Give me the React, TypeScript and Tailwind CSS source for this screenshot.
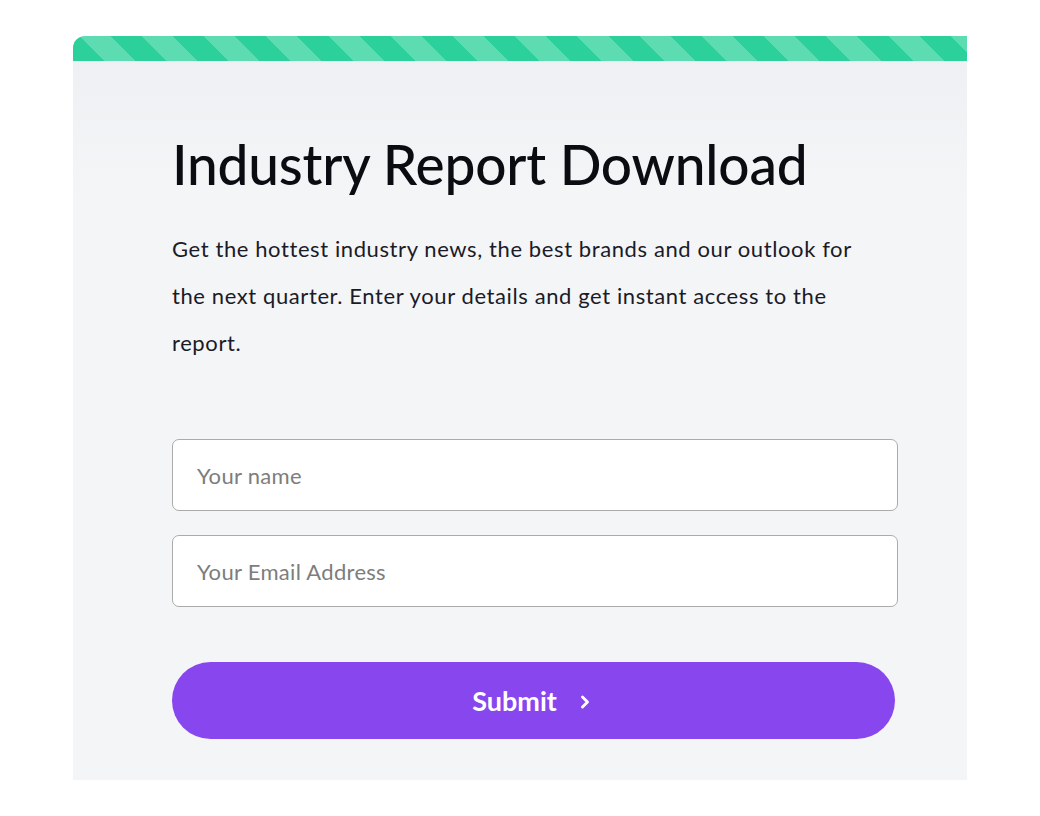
import { ChevronRight } from 'lucide-react'

export default function App() {
  return (
    <div className="min-h-screen bg-white pt-[36px] pl-[73px] font-['Lato',sans-serif]">
      <section className="w-[894px] h-[744px] bg-[#f3f4f6] rounded-tl-[12px] overflow-hidden flex flex-col">
        {/* Striped top band */}
        <div className="h-[25px] w-full bg-[repeating-linear-gradient(45deg,#2bd09a_0px,#2bd09a_22px,#5ddcb2_22px,#5ddcb2_44px)]" />

        <div className="flex-1 bg-[linear-gradient(180deg,#eef0f3_0%,#f4f5f7_18%,#f4f5f7_100%)] pl-[99px] pr-[69px] pt-[68px]">
          <h1 className="text-[55px] leading-[70px] font-medium text-[#0b0b12] tracking-[-0.2px]">
            Industry Report Download
          </h1>

          <p className="mt-[26px] w-[692px] text-[22px] leading-[47px] tracking-[0.6px] text-[#1b1b28]">
            Get the hottest industry news, the best brands and our outlook for the next quarter. Enter your details and get instant access to the report.
          </p>

          <form className="mt-[73px] flex flex-col gap-[24px]" onSubmit={e => e.preventDefault()}>
            <input
              type="text"
              placeholder="Your name"
              className="w-[726px] h-[72px] rounded-[7px] border-[1.5px] border-[#ababab] bg-white px-[24px] text-[22px] tracking-[0.3px] text-[#333] placeholder:text-[#7d7d7d] outline-none"
            />
            <input
              type="email"
              placeholder="Your Email Address"
              className="w-[726px] h-[72px] rounded-[7px] border-[1.5px] border-[#ababab] bg-white px-[24px] text-[22px] tracking-[0.3px] text-[#333] placeholder:text-[#7d7d7d] outline-none"
            />

            <button
              type="submit"
              className="mt-[31px] w-[723px] h-[77px] rounded-full bg-[#8846ee] text-white text-[27px] font-bold flex items-center justify-center gap-[18px] pt-[2px]"
            >
              Submit
              <ChevronRight size={20} strokeWidth={3.5} />
            </button>
          </form>
        </div>
      </section>
    </div>
  )
}
